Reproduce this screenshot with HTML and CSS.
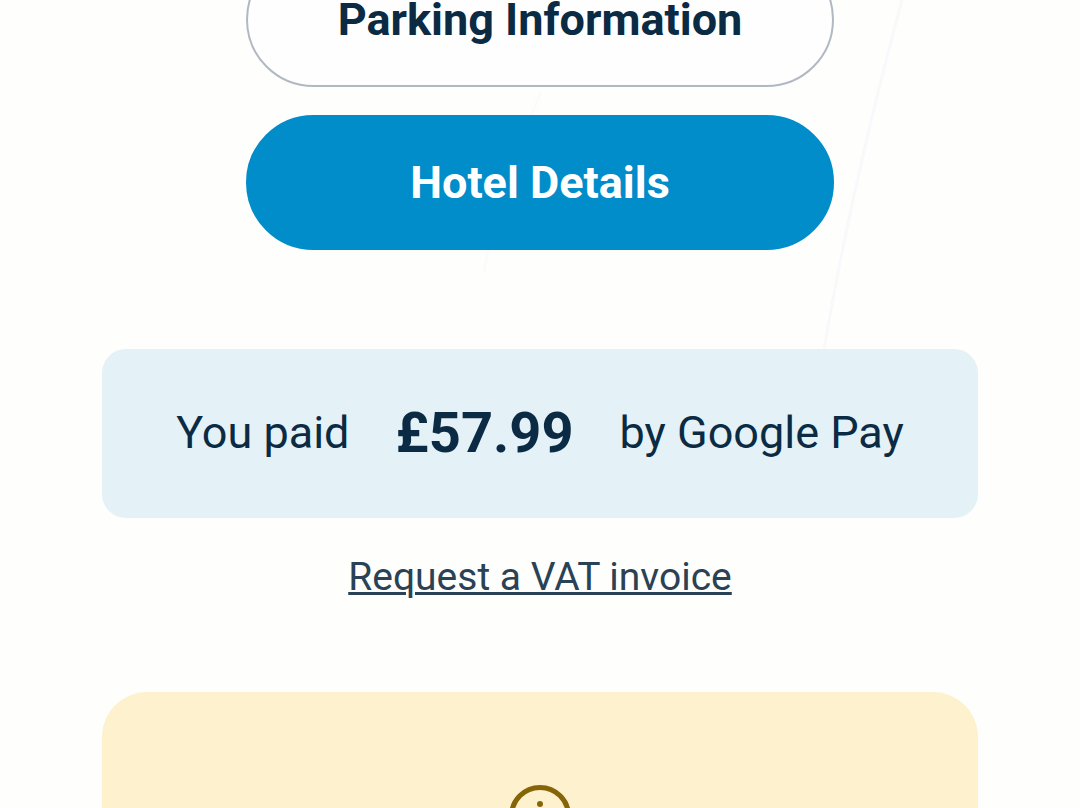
FILE: index.html
```html
<!DOCTYPE html>
<html lang="en">
<head>
<meta charset="utf-8">
<meta name="viewport" content="width=device-width, initial-scale=1">
<title>Booking confirmation</title>
<link rel="stylesheet" href="styles.css">
</head>
<body>
<svg class="backdrop" viewBox="0 0 1080 808" preserveAspectRatio="xMidYMin slice" aria-hidden="true">
  <path d="M902 0C871 115 844 230 824 350"/>
  <path class="faint" d="M541 92C516 150 496 205 484 272"/>
</svg>
<main class="page">
  <nav class="actions" aria-label="Booking actions">
    <button class="button button-outline" type="button">Parking Information</button>
    <button class="button button-primary" type="button">Hotel Details</button>
  </nav>
  <section class="payment">
    <p class="payment-summary">
      <span>You paid</span>
      <strong class="amount">£57.99</strong>
      <span>by Google Pay</span>
    </p>
    <a class="invoice-link" href="#invoice">Request a VAT invoice</a>
  </section>
  <section class="notice" aria-label="Information">
    <svg class="notice-icon" viewBox="0 0 64 64" aria-hidden="true">
      <circle class="ring" cx="32" cy="32" r="28.5"/>
      <circle class="dot" cx="32" cy="20" r="3"/>
      <path class="ring" d="M32 29v19"/>
    </svg>
  </section>
</main>
</body>
</html>
```
FILE: styles.css
```css
* {
  box-sizing: border-box;
}

body {
  margin: 0;
  height: 100vh;
  overflow: hidden;
  background: #fefefc;
  color: #0b2b45;
  font-family: Roboto, "Liberation Sans", sans-serif;
  font-size: 45px;
  line-height: 56px;
}

.backdrop {
  position: absolute;
  top: 0;
  left: 0;
  width: 100%;
  height: 100%;
  fill: none;
  stroke: #f9f9fb;
  stroke-width: 3;
}

.faint {
  stroke: #fbfbfb;
}

.page {
  position: relative;
  max-width: 1080px;
  margin: -48px auto 0;
  padding: 0 102px;
}

.actions {
  display: flex;
  flex-direction: column;
  gap: 28px;
  padding: 0 144px;
}

.button {
  min-height: 135px;
  padding: 0 24px;
  border: 2px solid transparent;
  border-radius: 68px;
  font: inherit;
  font-weight: 700;
  color: inherit;
  cursor: pointer;
}

.button-outline {
  background: #fefefe;
  border-color: #b0b9c2;
}

.button-primary {
  background: #018dca;
  border-color: #018dca;
  color: #fff;
}

.payment {
  display: flex;
  flex-direction: column;
  align-items: center;
  gap: 35px;
  margin-top: 99px;
}

.payment-summary {
  display: flex;
  align-items: center;
  justify-content: center;
  gap: 46px;
  width: 100%;
  min-height: 169px;
  margin: 0;
  padding-bottom: 2px;
  border-radius: 24px;
  background: #e4f1f7;
}

.amount {
  font-size: 56px;
}

.invoice-link {
  color: #2a4255;
  font-size: 39px;
  line-height: 48px;
  text-decoration-thickness: 3px;
}

.notice {
  display: flex;
  justify-content: center;
  min-height: 320px;
  margin-top: 91px;
  padding-top: 92px;
  border-radius: 45px;
  background: #fef1cd;
}

.notice-icon {
  width: 64px;
  height: 64px;
}

.ring {
  fill: none;
  stroke: #866508;
  stroke-width: 5;
}

.dot {
  fill: #866508;
}
```
